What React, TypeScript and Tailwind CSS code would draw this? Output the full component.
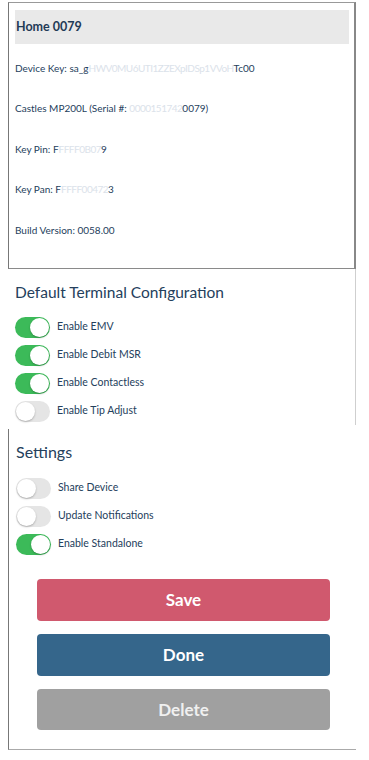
import React from "react";

const font = { fontFamily: "Lato, 'Open Sans', sans-serif" };

function Toggle({ on }: { on: boolean }) {
  return (
    <div
      className={
        "relative h-[21px] w-[35px] shrink-0 rounded-full " +
        (on ? "bg-[#3cba59]" : "bg-[#e5e5e5]")
      }
    >
      <div
        className={
          "absolute top-[1px] h-[19px] w-[19px] rounded-full bg-white shadow-[0_1px_2px_rgba(0,0,0,0.25)] " +
          (on ? "right-[1px]" : "left-[1px]")
        }
      />
    </div>
  );
}

function ToggleRow({ label, on }: { label: string; on: boolean }) {
  return (
    <div className="flex h-[28px] items-center gap-[7px]">
      <Toggle on={on} />
      <span className="text-[10.5px] text-[#24405c]">{label}</span>
    </div>
  );
}

function InfoRow({ children }: { children: React.ReactNode }) {
  return (
    <div className="flex h-[40.5px] items-center pl-[6px] text-[10px] text-[#24405c]">
      <span>{children}</span>
    </div>
  );
}

const Hidden = ({ text }: { text: string }) => (
  <span className="text-[#dbe2ea] tracking-[-0.5px]">{text}</span>
);

export default function App() {
  return (
    <div className="h-[760px] w-[369px] bg-white" style={font}>
      <div className="ml-[8px] mt-[2px] h-[267px] w-[348px] border-b-[1.5px] border-l border-r-2 border-t border-b-[#8a8a8a] border-l-[#777] border-r-[#888] border-t-[#999] pt-[7px]">
        <div className="ml-[6px] flex h-[34px] w-[334px] items-center bg-[#e9e9e9] pl-[1px] text-[12.5px] font-bold text-[#1f3a56]">
          Home 0079
        </div>
        <div className="pt-[4px]">
          <InfoRow>
            Device Key: sa_g<Hidden text="HWV0MU6UTI1ZZEXpIDSp1VVoH" />Tc00
          </InfoRow>
          <InfoRow>
            Castles MP200L (Serial #: <Hidden text="0000151742" />
            0079)
          </InfoRow>
          <InfoRow>
            Key Pin: F<Hidden text="FFFF0B07" />9
          </InfoRow>
          <InfoRow>
            Key Pan: F<Hidden text="FFFF00472" />3
          </InfoRow>
          <InfoRow>Build Version: 0058.00</InfoRow>
        </div>
      </div>

      <div className="ml-[8px] h-[156px] w-[348px] border-r border-[#cfcfcf] pl-[7px] pt-[11px]">
        <div className="text-[15.5px] leading-[24px] text-[#24405c]">
          Default Terminal Configuration
        </div>
        <div className="mt-[9px]">
          <ToggleRow label="Enable EMV" on />
          <ToggleRow label="Enable Debit MSR" on />
          <ToggleRow label="Enable Contactless" on />
          <ToggleRow label="Enable Tip Adjust" on={false} />
        </div>
      </div>

      <div className="ml-[8px] mt-[4px] h-[321px] w-[348px] border-b-[1.5px] border-l border-b-[#aaa] border-l-[#777] pl-[7px] pt-[11px]">
        <div className="text-[16px] leading-[24px] text-[#24405c]">Settings</div>
        <div className="mt-[10px]">
          <ToggleRow label="Share Device" on={false} />
          <ToggleRow label="Update Notifications" on={false} />
          <ToggleRow label="Enable Standalone" on />
        </div>
        <div className="ml-[21px] mt-[21px] flex w-[293px] flex-col gap-[13px]">
          <button className="h-[42px] rounded-[4px] bg-[#d0596e] text-[17px] font-bold text-white">
            Save
          </button>
          <button className="h-[42px] rounded-[4px] bg-[#35668b] text-[17px] font-bold text-white">
            Done
          </button>
          <button className="h-[41px] rounded-[4px] bg-[#a0a0a0] text-[17px] font-bold text-[#f0f0f0]">
            Delete
          </button>
        </div>
      </div>
    </div>
  );
}
